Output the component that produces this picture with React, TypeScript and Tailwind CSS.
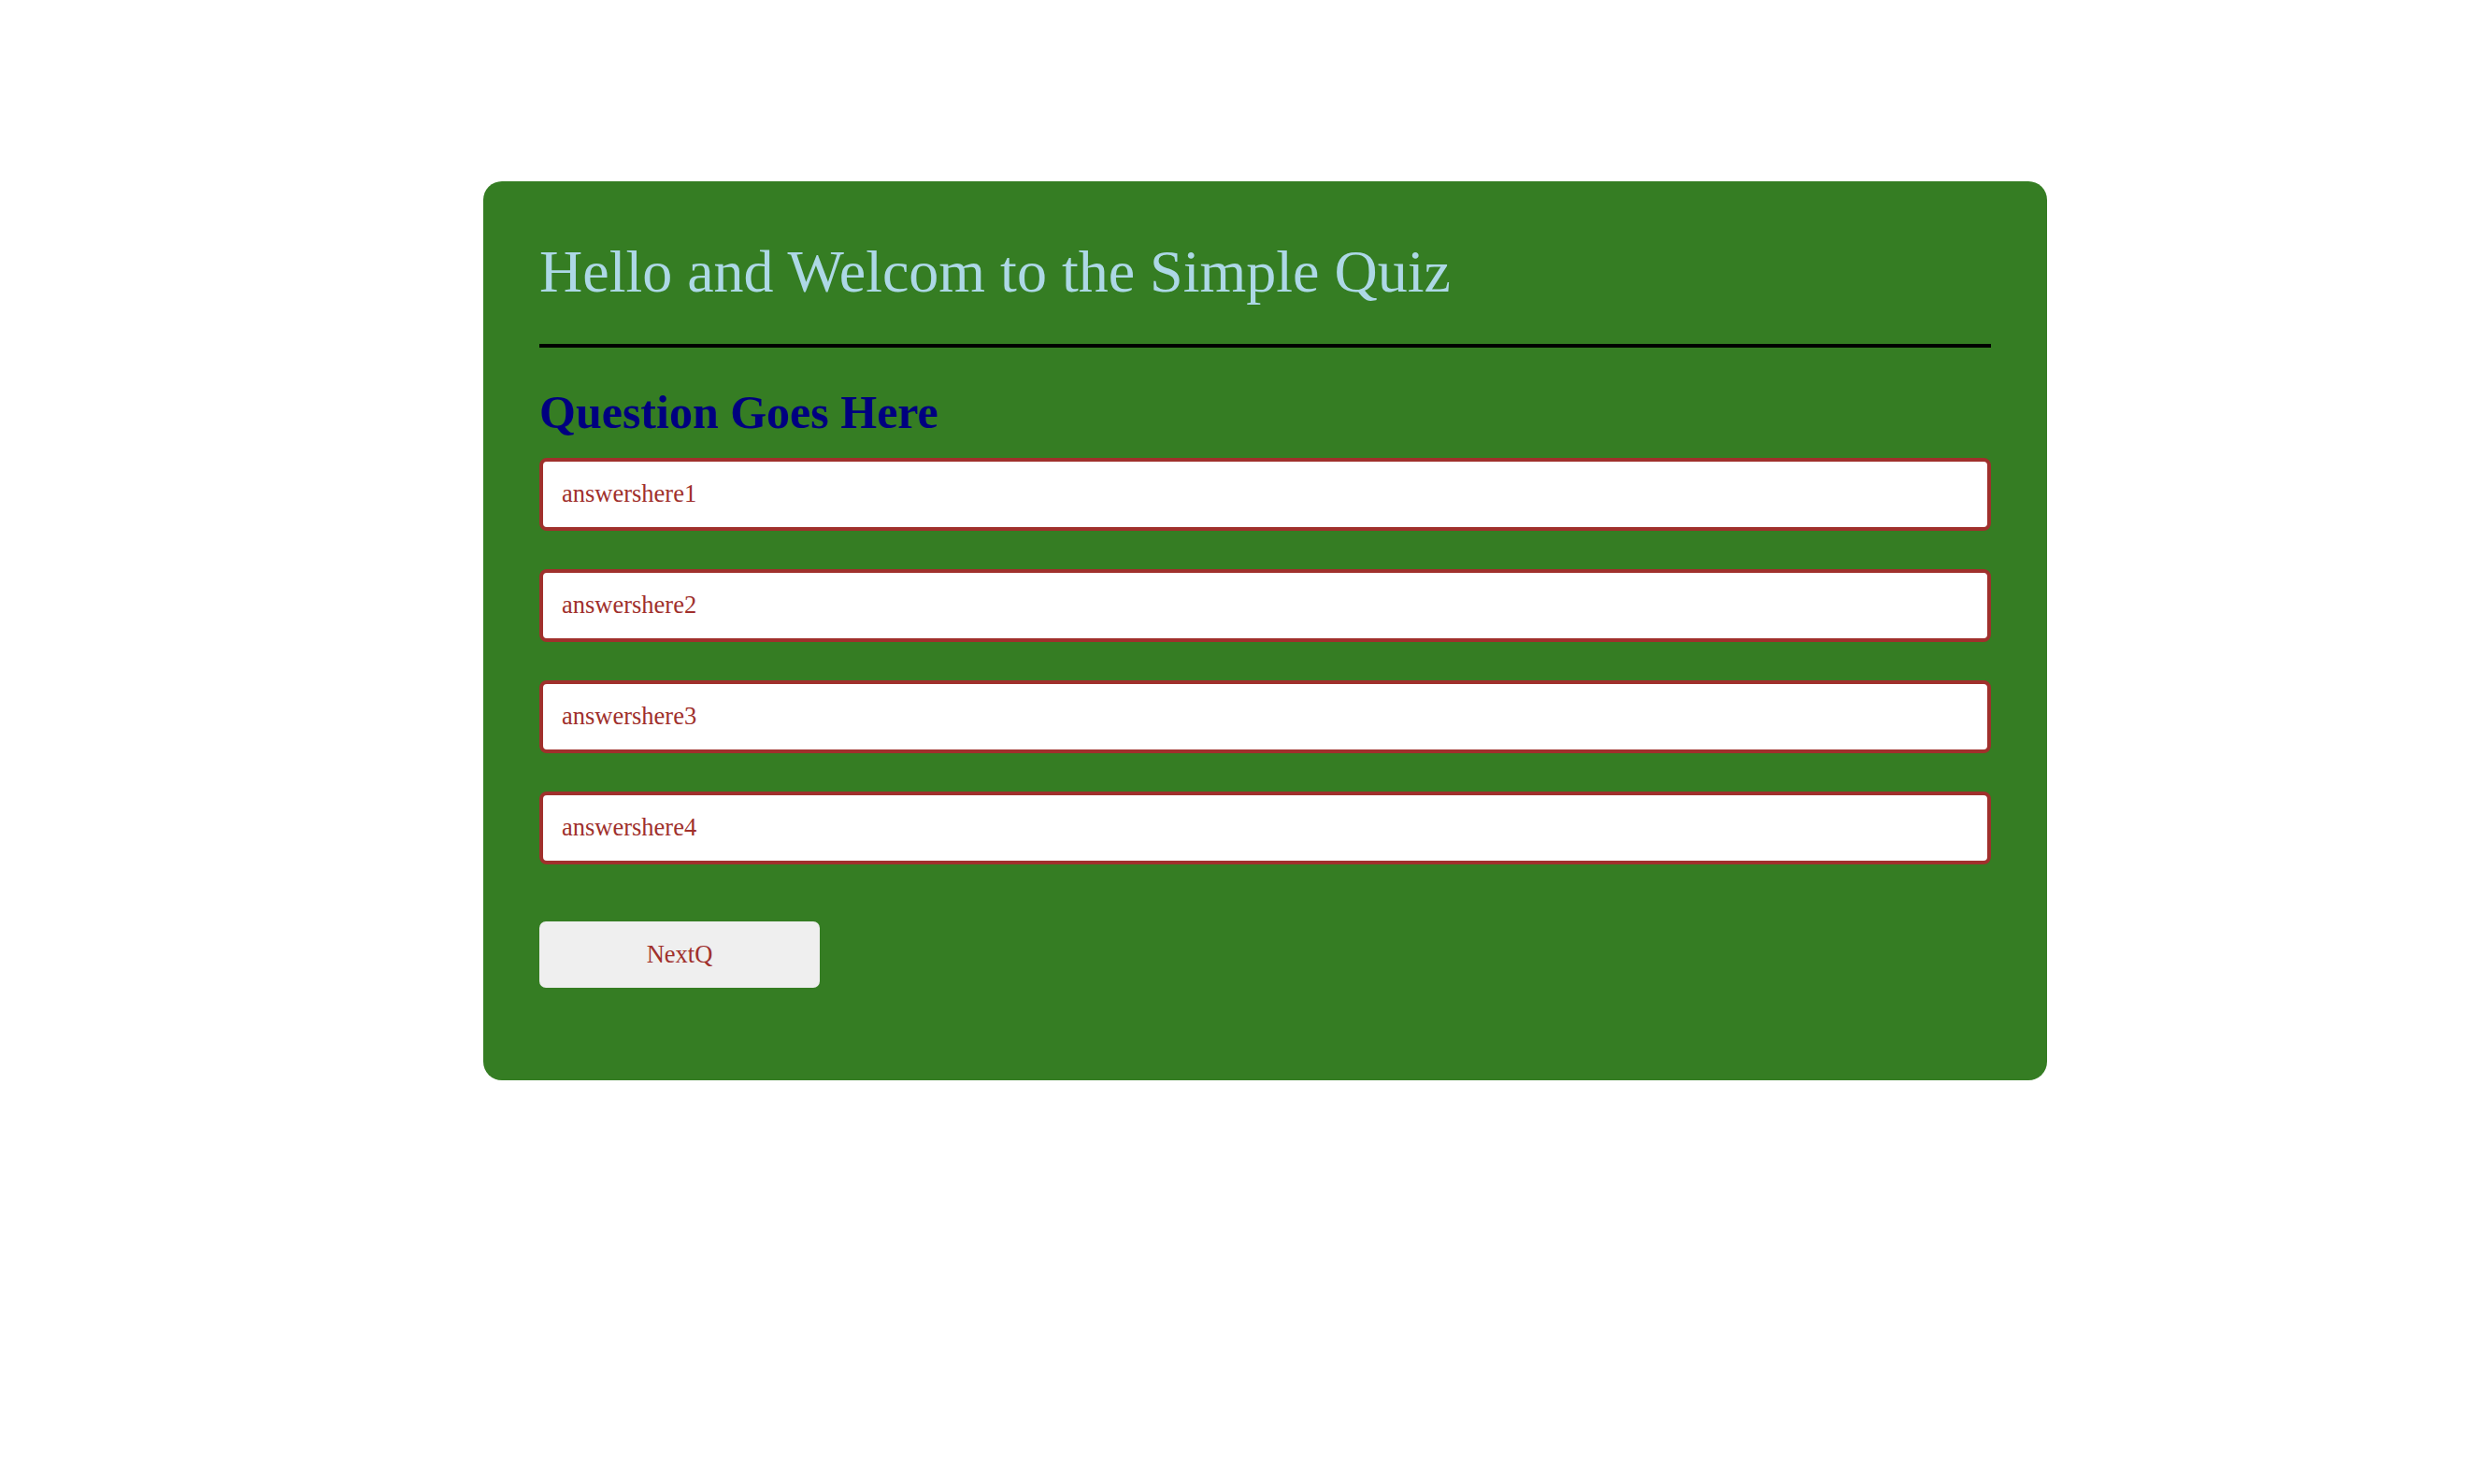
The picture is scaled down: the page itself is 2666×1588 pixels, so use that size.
import React, { useState } from 'react';

const ANSWERS = ['answershere1', 'answershere2', 'answershere3', 'answershere4'];

const App: React.FC = () => {
  const [picked, setPicked] = useState<number | null>(null);

  return (
    <div className="min-h-screen bg-white pt-[194px] font-['Liberation_Serif','Times_New_Roman',serif]">
      {/* Quiz card */}
      <div className="ml-[517px] w-[1673px] rounded-[20px] bg-[#357d23] px-[60px] pt-[60px] pb-[99px]">
        <h1 className="text-[64px] leading-[73.5px] font-normal text-[#add8e6]">
          Hello and Welcom to the Simple Quiz
        </h1>
        <hr className="mt-[40px] h-[4px] border-0 bg-black" />

        <h2 className="mt-[41px] text-[50px] leading-[57.5px] font-bold text-[#000080]">
          Question Goes Here
        </h2>

        <div className="mt-[20px] flex flex-col gap-[41px]">
          {ANSWERS.map((a, i) => (
            <button
              key={a}
              onClick={() => setPicked(i)}
              className={`flex h-[78px] w-full items-center rounded-[8px] border-[4px] border-[#a0302c] px-[20px] text-left text-[26.5px] text-[#a0302c] ${
                picked === i ? 'bg-[#f3e3e3]' : 'bg-white'
              }`}
            >
              {a}
            </button>
          ))}
        </div>

        <button className="mt-[61px] h-[71px] w-[300px] rounded-[7px] bg-[#efefef] text-[26.5px] text-[#a0302c]">
          NextQ
        </button>
      </div>
    </div>
  );
};

export default App;
